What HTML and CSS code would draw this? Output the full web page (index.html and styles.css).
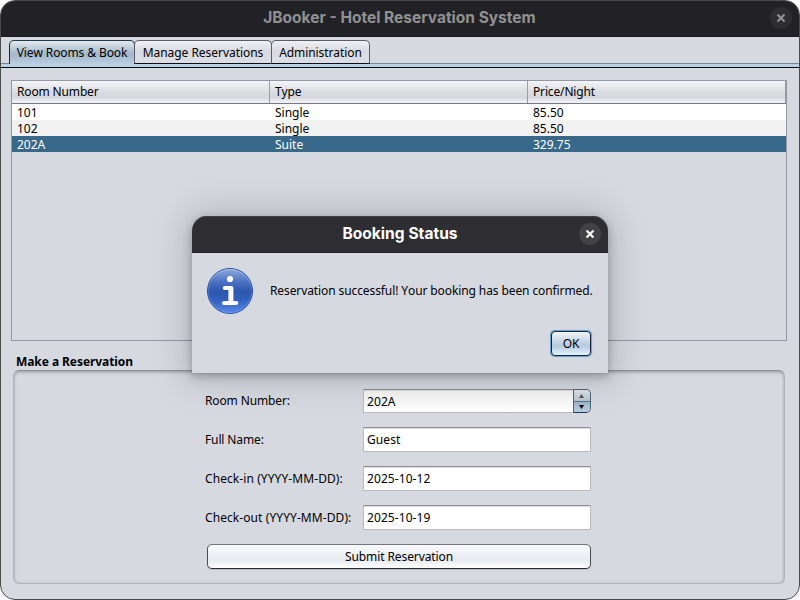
FILE: index.html
```html
<!DOCTYPE html>
<html lang="en">
<head>
<meta charset="utf-8">
<title>JBooker - Hotel Reservation System</title>
<link rel="stylesheet" href="styles.css">
</head>
<body>
<main class="window">
  <header class="titlebar">
    <h1>JBooker - Hotel Reservation System</h1>
    <button class="close" aria-label="Close"><svg width="8" height="8" viewBox="0 0 8 8"><path d="M0.5 0.5 7.5 7.5M7.5 0.5 0.5 7.5"/></svg></button>
  </header>
  <nav class="tabs">
    <button class="tab tab-first active">View Rooms &amp; Book</button>
    <button class="tab tab-second">Manage Reservations</button>
    <button class="tab tab-third">Administration</button>
  </nav>
  <div class="tab-line"></div>
  <section class="rooms">
    <div class="row head"><span>Room Number</span><span>Type</span><span>Price/Night</span></div>
    <div class="row"><span>101</span><span>Single</span><span>85.50</span></div>
    <div class="row alt"><span>102</span><span>Single</span><span>85.50</span></div>
    <div class="row selected"><span>202A</span><span>Suite</span><span>329.75</span></div>
  </section>
  <h2 class="group-title">Make a Reservation</h2>
  <form class="group">
    <div class="field"><label>Room Number:</label>
      <div class="spinner"><span class="value">202A</span>
        <span class="steps"><span class="step"><svg width="5" height="4" viewBox="0 0 5 4"><path fill="#555" d="M2.5 0 5 4H0z"/></svg></span><span class="step down"><svg width="5" height="4" viewBox="0 0 5 4"><path fill="#000" d="M0 0h5L2.5 4z"/></svg></span></span>
      </div>
    </div>
    <div class="field"><label>Full Name:</label><div class="input">Guest</div></div>
    <div class="field"><label class="date">Check-in (YYYY-MM-DD):</label><div class="input">2025-10-12</div></div>
    <div class="field"><label class="date">Check-out (YYYY-MM-DD):</label><div class="input">2025-10-19</div></div>
    <button type="button" class="submit">Submit Reservation</button>
  </form>
</main>
<div class="dialog" role="dialog">
  <header class="titlebar dialog-bar">
    <h1>Booking Status</h1>
    <button class="close" aria-label="Close"><svg width="8" height="8" viewBox="0 0 8 8"><path d="M0.5 0.5 7.5 7.5M7.5 0.5 0.5 7.5"/></svg></button>
  </header>
  <div class="message">
    <svg class="info" width="46" height="46" viewBox="0 0 46 46">
      <defs>
        <linearGradient id="ball" x1="0" y1="0" x2="0" y2="1"><stop offset="0" stop-color="#91abdf"/><stop offset=".3" stop-color="#4a70c0"/><stop offset=".5" stop-color="#2d57ae"/><stop offset=".7" stop-color="#3160bd"/><stop offset="1" stop-color="#5a8ae8"/></linearGradient>
        <linearGradient id="rim" x1="0" y1="0" x2="0" y2="1"><stop offset="0" stop-color="#a8bde8"/><stop offset=".5" stop-color="#4470c8"/><stop offset="1" stop-color="#6795f0"/></linearGradient>
      </defs>
      <circle cx="23" cy="23" r="22.5" fill="url(#ball)" stroke="#2a4f9e"/>
      <circle cx="23" cy="23" r="21.5" fill="none" stroke="url(#rim)"/>
      <circle cx="23" cy="11" r="3.1" fill="#fff"/>
      <path fill="#fff" d="M17.8 18h6.7a1.9 1.9 0 0 1 1.9 1.9V33h2.8a2 2 0 0 1 0 4H17a2 2 0 0 1 0-4h4.4V22h-3.6a2 2 0 0 1 0-4z"/>
    </svg>
    <p>Reservation successful! Your booking has been confirmed.</p>
  </div>
  <div class="actions"><button class="ok">OK</button></div>
</div>
</body>
</html>
```
FILE: styles.css
```css
* { box-sizing: border-box; }
body {
  margin: 0;
  width: 800px;
  height: 600px;
  overflow: hidden;
  position: relative;
  background: #fff;
  color: #000;
  font: 12px/16px "Noto Sans", sans-serif;
  font-kerning: none;
  letter-spacing: -0.1px;
}
button { font: inherit; font-kerning: none; letter-spacing: inherit; color: inherit; margin: 0; padding: 0; border: 0; }
h1, h2, p { margin: 0; }

.window {
  height: 600px;
  border: 1px solid #4a4a4a;
  border-radius: 15px;
  overflow: hidden;
  background: #d6d9e0;
}
.titlebar {
  height: 36px;
  display: grid;
  grid-template-columns: 40px 1fr 40px;
  align-items: center;
  background: #222226;
  border-bottom: 1px solid #19191b;
  color: #919193;
}
.titlebar h1 {
  grid-column: 2;
  text-align: center;
  font: bold 15.5px/20px Inter, sans-serif;
  letter-spacing: 0;
  margin: -2px 0 0 -1px;
}
.close {
  width: 22px;
  height: 22px;
  margin: -1px 0 0 11px;
  border-radius: 50%;
  display: flex;
  align-items: center;
  justify-content: center;
  background: #2e2e32;
}
.close path { fill: none; stroke: currentColor; stroke-width: 2.2; }

.tabs { height: 27px; display: flex; padding: 3px 0 0 8px; }
.tab {
  position: relative;
  z-index: 1;
  height: 24px;
  padding: 1px 0 0;
  letter-spacing: -0.04px;
  border: 1px solid #5a5d66;
  border-bottom-color: #0c0f18;
  border-radius: 5px 5px 0 0;
  background: linear-gradient(#eff0f3, #d9dbe1 45%, #dcdee5);
}
.tab-first { width: 126px; }
.tab-second { width: 138px; margin-left: -1px; }
.tab-third { width: 99px; margin-left: -1px; letter-spacing: -0.08px; }
.active {
  padding: 0;
  letter-spacing: -0.1px;
  border-color: #24384d #101c2c transparent #18283a;
  border-bottom: 0;
  background: linear-gradient(#e4eaf0, #b3c4d3 40%, #a3b8cb 60%, #b8cfe1);
}
.tab-line {
  height: 5px;
  margin-top: -1px;
  border-top: 1px solid #77869a;
  border-bottom: 1px solid #000814;
  background: #bad1e4;
}

.rooms {
  margin: 12px 12px 0 10px;
  height: 261px;
  border: 1px solid #9297a1;
}
.row { height: 16px; display: grid; grid-template-columns: 258px 258px 1fr; background: #fff; letter-spacing: 0; }
.row span { padding-left: 5px; line-height: 18px; height: 16px; }
.head {
  height: 23px;
  border-bottom: 1px solid #777985;
  background: linear-gradient(#f4f5f7, #dbdde1 48%, #d4d7dc 72%, #f2f4fa);
  letter-spacing: -0.15px;
}
.head span { height: 22px; line-height: 21px; border-right: 1px solid #999ca3; }
.alt { background: #f2f2f2; }
.selected { background: #39698a; color: #fff; }

.group-title { font: bold 12px/16px "Noto Sans", sans-serif; margin: 13px 0 0 15px; letter-spacing: -0.07px; }
.group {
  height: 214px;
  margin: 0 14px 0 12px;
  padding: 18px 193px 0 191px;
  border: 1px solid #b0b3b8;
  border-top-color: #8c8f94;
  border-radius: 6px;
  box-shadow: inset 0 2px 3px rgba(0,0,0,.17), inset 0 0 3px rgba(0,0,0,.14);
}
.field { height: 25px; margin-bottom: 14px; display: grid; grid-template-columns: 158px 1fr; }
.field label { line-height: 24px; white-space: nowrap; letter-spacing: -0.13px; }
.field .date { letter-spacing: 0.08px; }
.input, .value {
  height: 25px;
  padding-left: 3px;
  line-height: 23px;
  border: 1px solid #b9bbc0;
  border-top: 1px solid #8d8e91;
  background: #fff;
  box-shadow: inset 0 2px 1px -1px #ddd;
  letter-spacing: 0.08px;
}
.input { margin-top: -1px; }
.spinner { height: 24px; display: grid; grid-template-columns: 1fr 18px; }
.value { height: 24px; border-right: 0; line-height: 24px; background: linear-gradient(#f3f3f3, #fff); }
.steps { border: 1px solid #4b6379; border-bottom-color: #1d364e; border-radius: 0 5px 5px 0; overflow: hidden; height: 24px; }
.step { height: 11px; display: flex; align-items: center; justify-content: center; padding-right: 1px; background: linear-gradient(#e0e5eb, #b8c5cf); }
.down { border-top: 1px solid #5b738a; background: linear-gradient(#9fb6ca, #b9cde0); }
.submit {
  display: block;
  width: 384px;
  height: 25px;
  margin: -1px 0 0 2px;
  border: 1px solid #4a4d54;
  border-top-color: #74777f;
  border-bottom-color: #24272e;
  border-radius: 5px;
  background: linear-gradient(#f8f9fb, #e8ebf1 62%, #e9ecf2 70%, #fff);
  box-shadow: 0 1px 1px #b9bcc3;
}

.dialog {
  position: absolute;
  left: 192px;
  top: 216px;
  width: 416px;
  height: 157px;
  background: #d6d9e0;
  border-radius: 15px 15px 0 0;
  box-shadow: 0 3px 9px 1px rgba(0,0,0,.22), 0 1px 34px 8px rgba(0,0,0,.15);
}
.dialog-bar {
  height: 37px;
  border-radius: 15px 15px 0 0;
  border-bottom-color: #222225;
  background: #2e2e32;
  color: #fff;
  box-shadow: inset 0 1px #424246;
}
.dialog-bar h1 { margin: -1px 0 0; letter-spacing: 0.05px; }
.dialog-bar .close { background: #434347; }
.message { display: flex; align-items: center; gap: 17px; padding: 15px 0 0 15px; }
.actions { display: flex; justify-content: flex-end; padding: 17px 17px 0 0; }
.ok {
  width: 40px;
  height: 25px;
  border: 1px solid #0f2539;
  border-radius: 4px;
  background: linear-gradient(#f0f4f8, #c4d3e1 45%, #b6cade 60%, #e2f3ff);
  box-shadow: 0 0 0 1px #73a4d1, 0 0 1px 1px #73a4d1;
}
```
